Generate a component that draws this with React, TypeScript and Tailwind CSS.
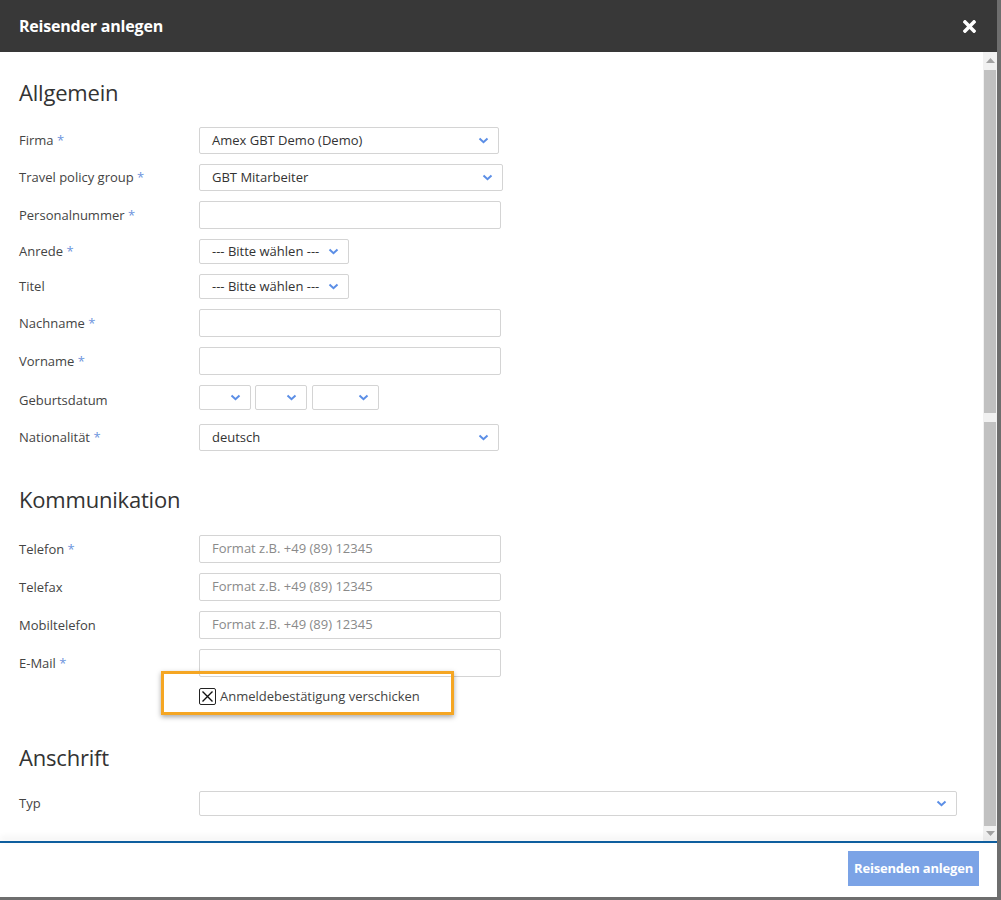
import { FaTimes } from "react-icons/fa";

type Row = {
  label: string;
  required?: boolean;
  kind: "select" | "input" | "date";
  width?: string;
  height: string;
  mt: string;
  value?: string;
  placeholder?: string;
};

const allgemein: Row[] = [
  { label: "Firma", required: true, kind: "select", width: "w-[300px]", height: "h-[27px]", mt: "mt-0", value: "Amex GBT Demo (Demo)" },
  { label: "Travel policy group", required: true, kind: "select", width: "w-[304px]", height: "h-[27px]", mt: "mt-[10px]", value: "GBT Mitarbeiter" },
  { label: "Personalnummer", required: true, kind: "input", width: "w-[302px]", height: "h-[28px]", mt: "mt-[10px]" },
  { label: "Anrede", required: true, kind: "select", width: "w-[150px]", height: "h-[25px]", mt: "mt-[10px]", value: "--- Bitte wählen ---" },
  { label: "Titel", kind: "select", width: "w-[150px]", height: "h-[25px]", mt: "mt-[10px]", value: "--- Bitte wählen ---" },
  { label: "Nachname", required: true, kind: "input", width: "w-[302px]", height: "h-[28px]", mt: "mt-[10px]" },
  { label: "Vorname", required: true, kind: "input", width: "w-[302px]", height: "h-[28px]", mt: "mt-[10px]" },
  { label: "Geburtsdatum", kind: "date", height: "h-[25px]", mt: "mt-[10px]" },
  { label: "Nationalität", required: true, kind: "select", width: "w-[300px]", height: "h-[27px]", mt: "mt-[14px]", value: "deutsch" },
];

const phone = "Format z.B. +49 (89) 12345";

const kommunikation: Row[] = [
  { label: "Telefon", required: true, kind: "input", width: "w-[302px]", height: "h-[28px]", mt: "mt-0", placeholder: phone },
  { label: "Telefax", kind: "input", width: "w-[302px]", height: "h-[28px]", mt: "mt-[10px]", placeholder: phone },
  { label: "Mobiltelefon", kind: "input", width: "w-[302px]", height: "h-[28px]", mt: "mt-[10px]", placeholder: phone },
  { label: "E-Mail", required: true, kind: "input", width: "w-[302px]", height: "h-[28px]", mt: "mt-[10px]" },
];

const Chevron = () => (
  <svg width="11" height="7" viewBox="0 0 11 7" className="shrink-0">
    <polyline points="1.5,1.5 5.5,5.2 9.5,1.5" fill="none" stroke="#5b8ee6" strokeWidth="2" />
  </svg>
);

const SelectBox = ({ width, height, value }: { width: string; height: string; value?: string }) => (
  <div className={`${width} ${height} flex items-center justify-between border border-[#d4d4d4] rounded-[2px] bg-white pl-3 pr-[9px]`}>
    <span className="text-[13px] text-[#333]">{value}</span>
    <Chevron />
  </div>
);

const TextBox = ({ width, height, placeholder }: { width: string; height: string; placeholder?: string }) => (
  <div className={`${width} ${height} flex items-center border border-[#d4d4d4] rounded-[2px] bg-white pl-3`}>
    <span className="text-[13px] text-[#8a8a8a]">{placeholder}</span>
  </div>
);

const FormRow = ({ row }: { row: Row }) => (
  <div className={`flex items-center ${row.mt}`}>
    <div className={`w-[180px] text-[13px] text-[#444] pt-[1px] ${row.kind === "date" ? "translate-y-[3px]" : ""}`}>
      {row.label}
      {row.required && <span className="text-[#6d94dd]"> *</span>}
    </div>
    {row.kind === "select" && <SelectBox width={row.width!} height={row.height} value={row.value} />}
    {row.kind === "input" && <TextBox width={row.width!} height={row.height} placeholder={row.placeholder} />}
    {row.kind === "date" && (
      <div className="flex">
        <SelectBox width="w-[52px]" height={row.height} />
        <div className="ml-[4px]">
          <SelectBox width="w-[52px]" height={row.height} />
        </div>
        <div className="ml-[5px]">
          <SelectBox width="w-[67px]" height={row.height} />
        </div>
      </div>
    )}
  </div>
);

const Heading = ({ children, mt }: { children: string; mt: string }) => (
  <h2 className={`${mt} text-[22px] leading-[30px] font-medium tracking-[-0.2px] text-[#333]`}>{children}</h2>
);

const Scrollbar = () => (
  <div className="w-[14px] bg-[#f1f1f1] flex flex-col items-center">
    <svg width="9" height="5" viewBox="0 0 9 5" className="mt-[6px]">
      <polygon points="0,5 4.5,0 9,5" fill="#a3a3a3" />
    </svg>
    <div className="mt-[7px] w-[12px] h-[343px] bg-[#c1c1c1]" />
    <div className="mt-[9px] w-[12px] h-[404px] bg-[#c1c1c1]" />
    <svg width="9" height="5" viewBox="0 0 9 5" className="mt-[5px]">
      <polygon points="0,0 4.5,5 9,0" fill="#a3a3a3" />
    </svg>
  </div>
);

export default function App() {
  return (
    <div className="w-[1001px] h-[900px] bg-[#6e6e6e] overflow-hidden" style={{ fontFamily: '"Open Sans", "Liberation Sans", sans-serif' }}>
      <div className="w-[997px] h-[897px] bg-white flex flex-col">
        <div className="h-[52px] bg-[#383838] flex items-center justify-between pl-[19px] pr-[18px] shrink-0">
          <span className="text-white text-[16px] font-bold tracking-[-0.2px]">Reisender anlegen</span>
          <FaTimes className="text-white" size={19} />
        </div>

        <div className="flex h-[789px] shrink-0">
          <div className="flex-1 pl-[19px] pt-[25px]">
            <Heading mt="mt-0">Allgemein</Heading>
            <div className="mt-[20px]">
              {allgemein.map((r) => (
                <FormRow key={r.label} row={r} />
              ))}
            </div>

            <Heading mt="mt-[33px]">Kommunikation</Heading>
            <div className="mt-[21px]">
              {kommunikation.map((r) => (
                <FormRow key={r.label} row={r} />
              ))}
            </div>

            <div className="relative mt-[11px] ml-[180px] flex items-center gap-[4px] h-[17px]">
              <div className="absolute left-[-38px] top-[-17px] w-[293px] h-[44px] border-[3px] border-[#f5a623] shadow-[0_2px_5px_rgba(0,0,0,0.35)] pointer-events-none" />
              <svg width="17" height="17" viewBox="0 0 17 17">
                <rect x="0.5" y="0.5" width="16" height="16" rx="1.5" fill="white" stroke="#222" />
                <path d="M3.5 3.5 L13.5 13.5 M13.5 3.5 L3.5 13.5" stroke="#111" strokeWidth="1.4" />
              </svg>
              <span className="text-[13px] text-[#444]">Anmeldebestätigung verschicken</span>
            </div>

            <Heading mt="mt-[37px]">Anschrift</Heading>
            <div className="mt-[19px]">
              <FormRow row={{ label: "Typ", kind: "select", width: "w-[758px]", height: "h-[25px]", mt: "mt-0" }} />
            </div>
          </div>
          <Scrollbar />
        </div>

        <div className="h-[2px] bg-[#0e5e9e] shrink-0 shadow-[0_-3px_6px_rgba(0,0,0,0.12)]" />
        <div className="flex-1 flex items-start justify-end pr-[18px] pt-[8px]">
          <button className="w-[131px] h-[35px] bg-[#7ba3e6] text-white text-[13px] font-bold tracking-[-0.2px]">
            Reisenden anlegen
          </button>
        </div>
      </div>
    </div>
  );
}
